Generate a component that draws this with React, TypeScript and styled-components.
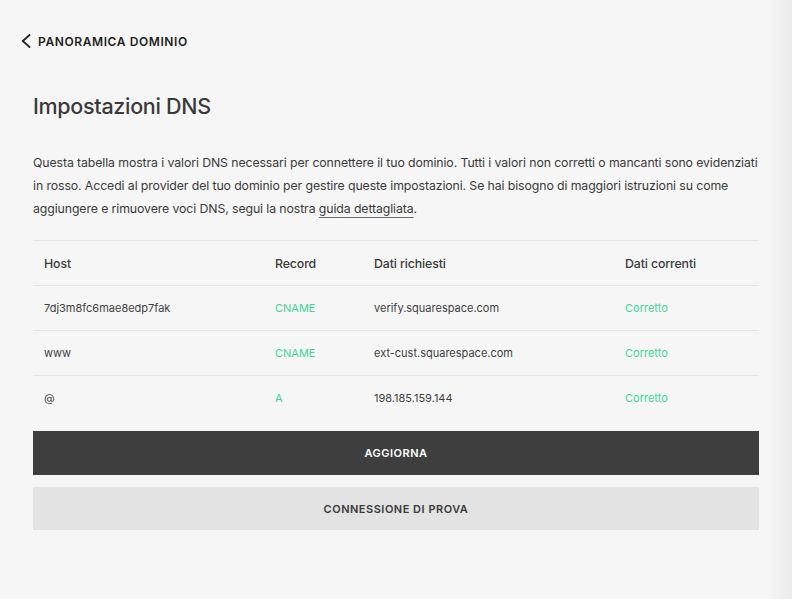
import React from 'react';
import styled, { createGlobalStyle } from 'styled-components';

interface DnsRow {
  host: string;
  record: string;
  required: string;
  current: string;
}

const rows: DnsRow[] = [
  { host: '7dj3m8fc6mae8edp7fak', record: 'CNAME', required: 'verify.squarespace.com', current: 'Corretto' },
  { host: 'www', record: 'CNAME', required: 'ext-cust.squarespace.com', current: 'Corretto' },
  { host: '@', record: 'A', required: '198.185.159.144', current: 'Corretto' },
];

const GlobalStyle = createGlobalStyle`
  html, body {
    margin: 0;
    padding: 0;
    background: #f6f6f6;
  }
  * {
    box-sizing: border-box;
  }
`;

const Page = styled.div`
  min-height: 599px;
  width: 100%;
  padding: 32px 33px 40px 33px;
  font-family: Inter, 'Noto Sans', sans-serif;
  color: #3a3a3a;
  background: linear-gradient(to right, #f6f6f6 calc(100% - 24px), #ebebeb 100%);
`;

const Content = styled.div`
  width: 726px;
  display: flex;
  flex-direction: column;
`;

const BackLink = styled.a`
  display: flex;
  align-items: center;
  gap: 6px;
  height: 18px;
  margin-left: -12px;
  font-size: 12px;
  font-weight: 600;
  letter-spacing: 0.6px;
  color: #1f1f1f;
  text-decoration: none;
  cursor: pointer;
`;

const Title = styled.h1`
  margin: 42px 0 0 0;
  font-size: 21.5px;
  line-height: 28px;
  font-weight: 500;
  color: #3a3a3a;
  letter-spacing: -0.3px;
`;

const Intro = styled.p`
  margin: 31px 0 0 0;
  font-size: 12.3px;
  line-height: 23px;
  letter-spacing: -0.1px;
  color: #3a3a3a;
`;

const GuideLink = styled.a`
  color: inherit;
  text-decoration: underline;
  text-decoration-color: #6a6a6a;
  text-underline-offset: 4px;
`;

const Table = styled.div`
  margin-top: 20px;
  display: flex;
  flex-direction: column;
`;

const Row = styled.div`
  display: grid;
  grid-template-columns: 231px 99px 251px 1fr;
  height: 45px;
  align-items: center;
  border-top: 1px solid #e3e3e3;
`;

const Cell = styled.div<{ $head?: boolean; $ok?: boolean }>`
  padding-left: 11px;
  font-size: ${({ $head }) => ($head ? '12.3px' : '11px')};
  font-weight: ${({ $head }) => ($head ? 500 : 400)};
  letter-spacing: ${({ $head }) => ($head ? '-0.1px' : '0')};
  color: ${({ $ok, $head }) => ($ok ? '#3bd69a' : $head ? '#3a3a3a' : '#3f3f3f')};
`;

const Button = styled.button<{ $primary?: boolean }>`
  height: ${({ $primary }) => ($primary ? '44px' : '43px')};
  margin-top: ${({ $primary }) => ($primary ? '11px' : '12px')};
  border: none;
  width: 100%;
  font-family: Inter, 'Noto Sans', sans-serif;
  font-size: 11px;
  font-weight: 600;
  letter-spacing: 0.5px;
  background: ${({ $primary }) => ($primary ? '#3e3e3e' : '#e3e3e3')};
  color: ${({ $primary }) => ($primary ? '#ffffff' : '#3a3a3a')};
  cursor: pointer;
`;

const ChevronLeft = () => (
  <svg width="11" height="14" viewBox="0 0 11 14" fill="none">
    <path d="M8.5 1 L1.8 7 L8.5 13" stroke="#1f1f1f" strokeWidth="1.8" strokeLinecap="square" />
  </svg>
);

export default function App() {
  return (
    <>
      <GlobalStyle />
      <Page>
        <Content>
          <BackLink>
            <ChevronLeft />
            PANORAMICA DOMINIO
          </BackLink>
          <Title>Impostazioni DNS</Title>
          <Intro>
            Questa tabella mostra i valori DNS necessari per connettere il tuo dominio. Tutti i valori non
            corretti o mancanti sono evidenziati in rosso. Accedi al provider del tuo dominio per gestire
            queste impostazioni. Se hai bisogno di maggiori istruzioni su come aggiungere e rimuovere voci
            DNS, segui la nostra <GuideLink>guida dettagliata</GuideLink>.
          </Intro>
          <Table>
            <Row>
              <Cell $head>Host</Cell>
              <Cell $head>Record</Cell>
              <Cell $head>Dati richiesti</Cell>
              <Cell $head>Dati correnti</Cell>
            </Row>
            {rows.map(r => (
              <Row key={r.host}>
                <Cell>{r.host}</Cell>
                <Cell $ok>{r.record}</Cell>
                <Cell>{r.required}</Cell>
                <Cell $ok>{r.current}</Cell>
              </Row>
            ))}
          </Table>
          <Button $primary>AGGIORNA</Button>
          <Button>CONNESSIONE DI PROVA</Button>
        </Content>
      </Page>
    </>
  );
}
